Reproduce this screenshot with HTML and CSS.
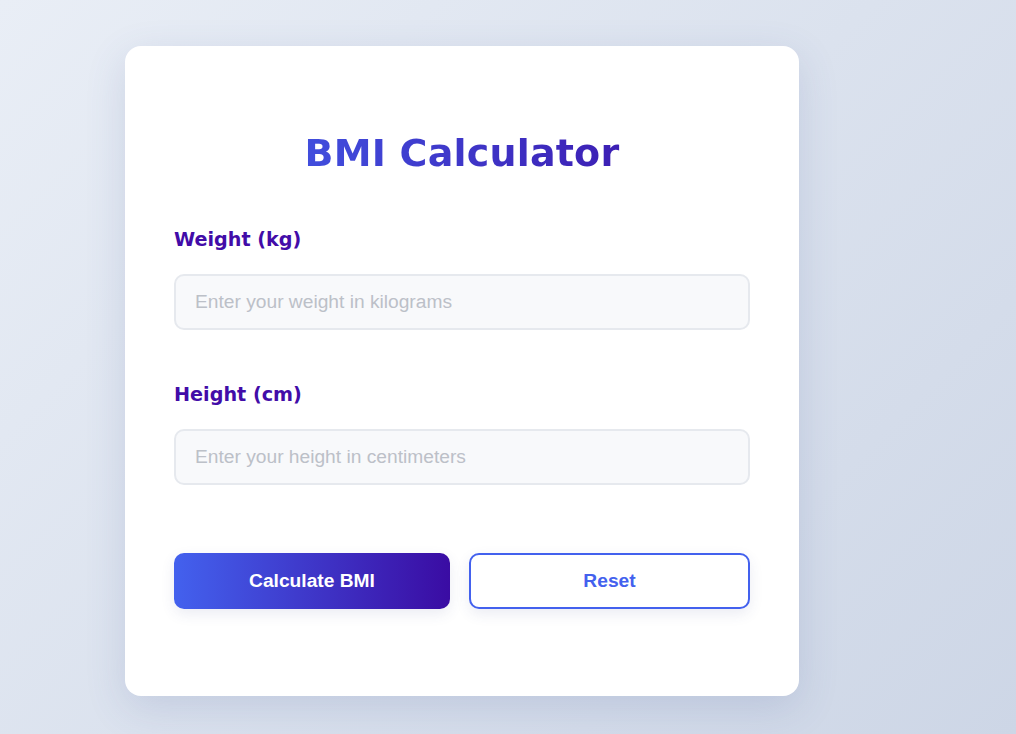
FILE: index.html
```html
<!DOCTYPE html>
<html lang="en">
<head>
<meta charset="utf-8">
<title>BMI Calculator</title>
<link rel="stylesheet" href="styles.css">
</head>
<body>
  <main class="page">
    <section class="card">
      <h1 class="title">BMI Calculator</h1>
      <form class="form">
        <div class="field">
          <label class="label" for="weight">Weight (kg)</label>
          <input class="input" id="weight" type="number" placeholder="Enter your weight in kilograms">
        </div>
        <div class="field">
          <label class="label" for="height">Height (cm)</label>
          <input class="input" id="height" type="number" placeholder="Enter your height in centimeters">
        </div>
        <div class="actions">
          <button type="button" class="btn btn-primary">Calculate BMI</button>
          <button type="reset" class="btn btn-outline">Reset</button>
        </div>
      </form>
    </section>
  </main>
</body>
</html>
```

FILE: styles.css
```css
* { box-sizing: border-box; }

html, body {
  margin: 0;
  height: 100%;
}

body {
  background: linear-gradient(135deg, #e9eef6 0%, #dbe2ee 50%, #cdd6e6 100%);
  font-family: "Liberation Sans", Arial, sans-serif;
  overflow: hidden;
}

.page {
  display: flex;
  align-items: flex-start;
  padding: 46px 0 0 125px;
}

.card {
  width: 674px;
  height: 650px;
  background: #ffffff;
  border-radius: 16px;
  padding: 85px 49px 0;
  box-shadow: 0 12px 40px rgba(70, 90, 150, 0.16);
}

.title {
  margin: 0 0 50px;
  text-align: center;
  font-family: "DejaVu Sans", Inter, sans-serif;
  font-weight: 700;
  font-size: 38px;
  line-height: 44px;
  letter-spacing: 0.2px;
  background: linear-gradient(90deg, #4361ee 0%, #3a0ca3 100%);
  -webkit-background-clip: text;
  background-clip: text;
  color: transparent;
}

.form {
  display: flex;
  flex-direction: column;
}

.field {
  display: flex;
  flex-direction: column;
  margin-bottom: 50px;
}

.field:nth-child(2) {
  margin-bottom: 68px;
}

.label {
  font-family: "DejaVu Sans", Inter, sans-serif;
  font-weight: 700;
  font-size: 19.2px;
  line-height: 30px;
  color: #420ca8;
  margin-bottom: 19px;
}

.input {
  height: 56px;
  width: 100%;
  border: 2px solid #e6e9ee;
  border-radius: 10px;
  background: #f8f9fb;
  padding: 0 19px;
  font-family: "Liberation Sans", Arial, sans-serif;
  font-size: 19.2px;
  color: #333;
  outline: none;
}

.input::placeholder {
  color: #bcc0c8;
}

.actions {
  display: flex;
  gap: 19px;
}

.btn {
  height: 56px;
  border-radius: 10px;
  font-family: "Liberation Sans", Arial, sans-serif;
  font-weight: 700;
  font-size: 19.2px;
  cursor: pointer;
  box-shadow: 0 5px 14px rgba(60, 70, 140, 0.10);
}

.btn-primary {
  flex: 0 0 276px;
  border: none;
  color: #ffffff;
  background: linear-gradient(90deg, #4361ee 0%, #3a0ca3 100%);
}

.btn-outline {
  flex: 1 1 auto;
  border: 2px solid #4361ee;
  color: #4361ee;
  background: #ffffff;
}
```
